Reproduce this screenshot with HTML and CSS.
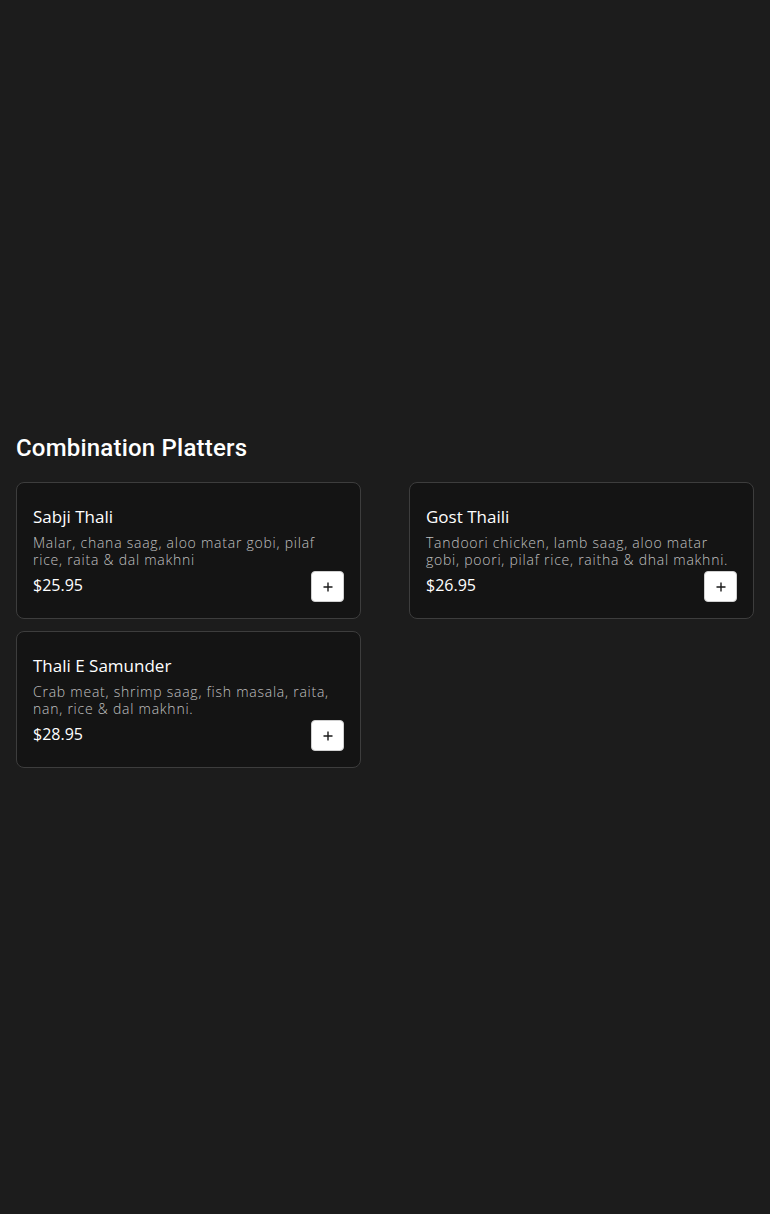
FILE: index.html
```html
<!DOCTYPE html>
<html>
<head>
<meta charset="utf-8">
<link rel="stylesheet" href="styles.css">
</head>
<body>
<div class="hero"></div>
<section class="menu">
  <h2 class="section-title">Combination Platters</h2>
  <div class="grid">
    <div class="card">
      <div class="name">Sabji Thali</div>
      <div class="desc">Malar, chana saag, aloo matar gobi, pilaf rice, raita &amp; dal makhni</div>
      <div class="row"><span class="price">$25.95</span><button class="add"><svg viewBox="0 0 10 10" width="10" height="10"><path d="M5 0.5V9.5M0.5 5H9.5" stroke="#1a1a1a" stroke-width="1.4" fill="none"/></svg></button></div>
    </div>
    <div class="card">
      <div class="name">Gost Thaili</div>
      <div class="desc">Tandoori chicken, lamb saag, aloo matar gobi, poori, pilaf rice, raitha &amp; dhal makhni.</div>
      <div class="row"><span class="price">$26.95</span><button class="add"><svg viewBox="0 0 10 10" width="10" height="10"><path d="M5 0.5V9.5M0.5 5H9.5" stroke="#1a1a1a" stroke-width="1.4" fill="none"/></svg></button></div>
    </div>
    <div class="card">
      <div class="name">Thali E Samunder</div>
      <div class="desc">Crab meat, shrimp saag, fish masala, raita, nan, rice &amp; dal makhni.</div>
      <div class="row"><span class="price">$28.95</span><button class="add"><svg viewBox="0 0 10 10" width="10" height="10"><path d="M5 0.5V9.5M0.5 5H9.5" stroke="#1a1a1a" stroke-width="1.4" fill="none"/></svg></button></div>
    </div>
  </div>
</section>
</body>
</html>
```
FILE: styles.css
```css
html, body {
  margin: 0;
  padding: 0;
  background: #1c1c1c;
  min-height: 1214px;
}
.hero {
  height: 420px;
}
.menu {
  padding: 0 16px;
}
.section-title {
  font-family: Roboto, sans-serif;
  font-weight: 500;
  font-size: 24px;
  letter-spacing: 0.2px;
  line-height: 32px;
  color: #ffffff;
  margin: 12px 0 18px;
}
.grid {
  display: grid;
  grid-template-columns: 1fr 1fr;
  column-gap: 48px;
  row-gap: 12px;
}
.card {
  background: #141414;
  border: 1px solid #3d3d3d;
  border-radius: 8px;
  padding: 22px 16px 16px;
  font-family: "Open Sans", sans-serif;
  display: flex;
  flex-direction: column;
}
.name {
  color: #ffffff;
  font-size: 17px;
  font-weight: 500;
  line-height: 24px;
}
.desc {
  color: #c0c0c0;
  font-size: 14px;
  font-weight: 300;
  letter-spacing: 0.76px;
  line-height: 17px;
  margin-top: 5px;
}
.row {
  display: flex;
  justify-content: space-between;
  align-items: flex-start;
  margin-top: 4px;
}
.price {
  color: #ffffff;
  font-size: 16px;
  font-weight: 400;
  line-height: 22px;
  margin-top: 2px;
}
.add {
  width: 33px;
  height: 31px;
  margin-top: -1px;
  background: #ffffff;
  border: 1px solid #d0d0d0;
  border-radius: 4px;
  padding: 0;
  display: flex;
  align-items: center;
  justify-content: center;
  cursor: pointer;
}
```
